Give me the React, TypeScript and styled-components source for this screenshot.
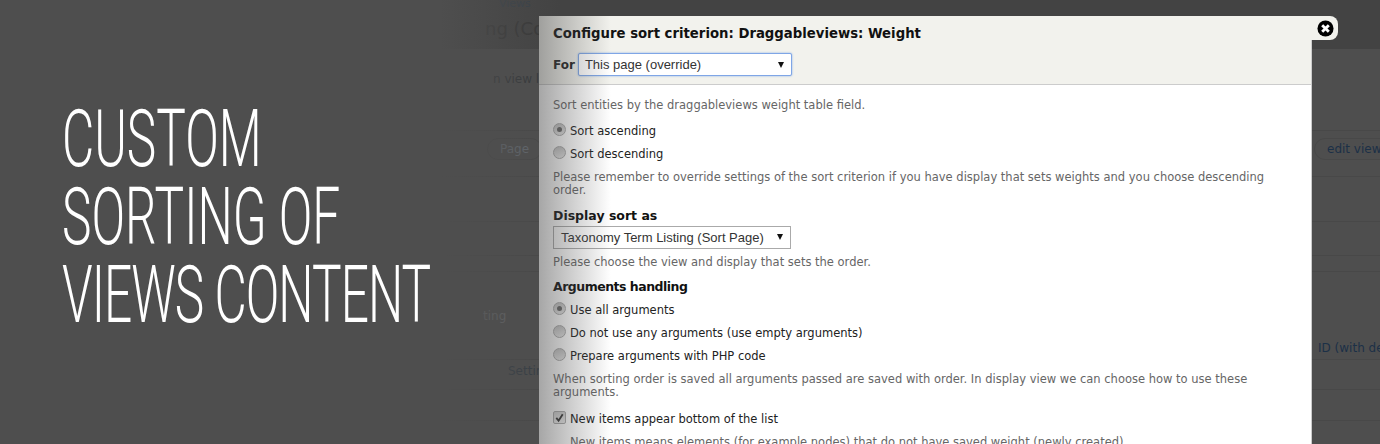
import React from "react";
import styled, { createGlobalStyle } from "styled-components";

const GlobalStyle = createGlobalStyle`
  html, body {
    margin: 0;
    padding: 0;
    background: #4e4e4e;
  }
`;

const App: React.FC = () => {
  return (
    <>
      <GlobalStyle />
      <Page>
        <Backdrop>
          <BackRow height={49} dark>
            <BackCell>
              <Breadcrumb>Views</Breadcrumb>
              <PageHeading>ng (Co</PageHeading>
            </BackCell>
            <span />
            <span />
          </BackRow>
          <BackRow height={82}>
            <BackCell>
              <BackText top={22} left={493} tone="#333639">n view l</BackText>
            </BackCell>
            <span />
            <span />
          </BackRow>
          <BackRow height={46}>
            <BackCell>
              <BackPill left={487} tone="#666c73">Page</BackPill>
            </BackCell>
            <span />
            <BackCell>
              <BackPill left={2} tone="#1c3047">edit view</BackPill>
            </BackCell>
          </BackRow>
          <BackRow height={45} />
          <BackRow height={34} />
          <BackRow height={16} />
          <BackRow height={88}>
            <BackCell>
              <BackText top={36} left={483} tone="#6a6c6e">ting</BackText>
            </BackCell>
            <span />
            <BackCell>
              <BackText top={68} left={6} tone="#1c3047">ID (with de</BackText>
            </BackCell>
          </BackRow>
          <BackRow height={30}>
            <BackCell>
              <BackText top={3} left={508} tone="#343c44">Settings</BackText>
            </BackCell>
            <span />
            <span />
          </BackRow>
          <BackRow height={31} />
        </Backdrop>
        <Fade />
        <Title>
          <TitleLine>CUSTOM</TitleLine>
          <TitleLine>SORTING OF</TitleLine>
          <TitleLine tight>VIEWS CONTENT</TitleLine>
        </Title>
        <Modal>
          <ModalHeader>
            <ModalTitle>Configure sort criterion: Draggableviews: Weight</ModalTitle>
            <ForRow>
              <ForLabel>For</ForLabel>
              <Select focused>
                This page (override)
                <Arrow />
              </Select>
            </ForRow>
          </ModalHeader>
          <ModalBody>
            <Description first>Sort entities by the draggableviews weight table field.</Description>
            <Option>
              <Radio checked />
              Sort ascending
            </Option>
            <Option>
              <Radio />
              Sort descending
            </Option>
            <Description>
              Please remember to override settings of the sort criterion if you have display that sets weights and you choose descending order.
            </Description>
            <SectionLabel top={11} gap={2}>Display sort as</SectionLabel>
            <Select>
              Taxonomy Term Listing (Sort Page)
              <Arrow />
            </Select>
            <Description>Please choose the view and display that sets the order.</Description>
            <SectionLabel top={10} gap={4} tight>Arguments handling</SectionLabel>
            <Option>
              <Radio checked />
              Use all arguments
            </Option>
            <Option>
              <Radio />
              Do not use any arguments (use empty arguments)
            </Option>
            <Option>
              <Radio />
              Prepare arguments with PHP code
            </Option>
            <Description>
              When sorting order is saved all arguments passed are saved with order. In display view we can choose how to use these arguments.
            </Description>
            <Option>
              <Checkbox>
                <svg viewBox="0 0 12 12" width="11" height="11">
                  <path d="M2.5 6.5l2.5 3L9.5 2.5" fill="none" stroke="#333" strokeWidth="2" />
                </svg>
              </Checkbox>
              New items appear bottom of the list
            </Option>
            <Description indent>
              New items means elements (for example nodes) that do not have saved weight (newly created).
            </Description>
          </ModalBody>
          <Shade />
          <CloseTab>
            <CloseIcon viewBox="0 0 18 18">
              <circle cx="9" cy="9" r="8.5" fill="#000" />
              <path d="M5.5 5.5l7 7M12.5 5.5l-7 7" stroke="#fff" strokeWidth="3" />
            </CloseIcon>
          </CloseTab>
        </Modal>
      </Page>
    </>
  );
};

export default App;

const Page = styled.div`
  position: relative;
  width: 1380px;
  height: 444px;
  overflow: hidden;
  background: #4e4e4e;
  font-family: "DejaVu Sans", sans-serif;
`;

const Backdrop = styled.div`
  position: absolute;
  inset: 0;
`;

const BackRow = styled.div<{ height: number; dark?: boolean }>`
  display: grid;
  grid-template-columns: 539px 773px 68px;
  box-sizing: border-box;
  height: ${({ height }) => height}px;
  background: ${({ dark }) => (dark ? "#434343" : "transparent")};
  border-bottom: ${({ dark }) => (dark ? "0" : "1px solid #484848")};
`;

const BackCell = styled.div`
  overflow: hidden;
  white-space: nowrap;
`;

const Breadcrumb = styled.div`
  padding: 0 0 0 499px;
  height: 7px;
  font-size: 11px;
  line-height: 7px;
  color: #364049;
`;

const PageHeading = styled.div`
  padding: 10px 0 0 485px;
  font-size: 18px;
  line-height: 24px;
  color: #363636;
`;

const BackText = styled.div<{ top: number; left: number; tone: string }>`
  padding: ${({ top }) => top}px 0 0 ${({ left }) => left}px;
  font-size: 12px;
  line-height: 16px;
  color: ${({ tone }) => tone};
`;

const BackPill = styled.div<{ left: number; tone: string }>`
  display: inline-block;
  margin: 7px 0 0 ${({ left }) => left}px;
  padding: 0 12px;
  height: 20px;
  line-height: 20px;
  font-size: 12px;
  color: ${({ tone }) => tone};
  border: 1px solid #484848;
  border-radius: 11px;
`;

const Fade = styled.div`
  position: absolute;
  left: 0;
  top: 0;
  bottom: 0;
  width: 560px;
  background: linear-gradient(to right, #4e4e4e 440px, rgba(78, 78, 78, 0));
`;

const Title = styled.h1`
  position: absolute;
  left: 62px;
  top: 100px;
  margin: 0;
  font-family: "Roboto", sans-serif;
  font-weight: 300;
  color: #fff;
  transform: scaleX(0.62);
  transform-origin: left top;
`;

const TitleLine = styled.div<{ tight?: boolean }>`
  font-size: 80px;
  line-height: 78px;
  letter-spacing: ${({ tight }) => (tight ? "-1.5px" : "0")};
  white-space: nowrap;
`;

const Modal = styled.div`
  position: absolute;
  left: 539px;
  top: 16px;
  box-sizing: border-box;
  width: 773px;
  height: 440px;
  background: #fff;
  border-right: 1px solid #ccc;
  font-size: 11.5px;
`;

const ModalHeader = styled.div`
  height: 68px;
  padding: 0 14px;
  background: #f2f2ed;
  border-bottom: 1px solid #ccc;
`;

const ModalTitle = styled.div`
  padding-top: 9px;
  font-size: 13.25px;
  line-height: 17px;
  font-weight: 700;
  color: #111;
`;

const ForRow = styled.div`
  display: flex;
  align-items: center;
  gap: 3px;
  margin-top: 11px;
`;

const ForLabel = styled.span`
  font-weight: 700;
  font-size: 12px;
  color: #222;
`;

const Select = styled.div<{ focused?: boolean }>`
  display: flex;
  align-items: center;
  justify-content: space-between;
  box-sizing: border-box;
  width: ${({ focused }) => (focused ? "214px" : "238px")};
  height: 23px;
  margin-bottom: ${({ focused }) => (focused ? "0" : "7px")};
  padding: 0 7px 0 ${({ focused }) => (focused ? "6px" : "7px")};
  background: #fff;
  border: 1px solid ${({ focused }) => (focused ? "#7fa6e6" : "#aaa")};
  border-radius: ${({ focused }) => (focused ? "2px" : "0")};
  box-shadow: ${({ focused }) => (focused ? "0 0 2px #7fa6e6" : "none")};
  font-family: "Liberation Sans", sans-serif;
  font-size: 13px;
  color: #333;
`;

const Arrow = styled.span`
  width: 0;
  height: 0;
  border-left: 3.5px solid transparent;
  border-right: 3.5px solid transparent;
  border-top: 6px solid #111;
`;

const ModalBody = styled.div`
  padding: 8.5px 14px 0;
`;

const Description = styled.div<{ indent?: boolean; first?: boolean }>`
  margin: 5.5px 0 ${({ first }) => (first ? "7px" : "8px")};
  margin-left: ${({ indent }) => (indent ? "17px" : "0")};
  line-height: 13px;
  color: #666;
`;

const Option = styled.div`
  display: flex;
  align-items: center;
  gap: 4px;
  height: 23px;
  color: #222;
`;

const Radio = styled.span<{ checked?: boolean }>`
  display: flex;
  align-items: center;
  justify-content: center;
  box-sizing: border-box;
  width: 13px;
  height: 13px;
  margin-bottom: 3px;
  border-radius: 50%;
  border: 1px solid #aaa;
  background: linear-gradient(#c4c4c4, #e6e6e6);
  &::after {
    content: "";
    display: ${({ checked }) => (checked ? "block" : "none")};
    width: 5px;
    height: 5px;
    border-radius: 50%;
    background: #666;
  }
`;

const Checkbox = styled.span`
  display: flex;
  align-items: center;
  justify-content: center;
  box-sizing: border-box;
  width: 13px;
  height: 13px;
  margin-bottom: 2px;
  border-radius: 2px;
  border: 1px solid #aaa;
  background: linear-gradient(#d0d0d0, #eee);
`;

const SectionLabel = styled.div<{ top: number; gap: number; tight?: boolean }>`
  margin: ${({ top }) => top}px 0 ${({ gap }) => gap}px;
  font-size: 12.5px;
  line-height: 16px;
  font-weight: 700;
  letter-spacing: ${({ tight }) => (tight ? "-0.5px" : "0")};
  color: #111;
`;

const Shade = styled.div`
  position: absolute;
  left: 0;
  top: 0;
  bottom: 0;
  width: 72px;
  background: linear-gradient(to right, rgba(78, 78, 78, 0.5), rgba(78, 78, 78, 0));
  pointer-events: none;
`;

const CloseTab = styled.div`
  position: absolute;
  left: 100%;
  top: 0;
  display: flex;
  align-items: center;
  justify-content: flex-end;
  width: 27px;
  height: 24px;
  padding-right: 4px;
  box-sizing: border-box;
  background: #f2f2ed;
  border-radius: 0 8px 8px 0;
`;

const CloseIcon = styled.svg`
  width: 17px;
  height: 17px;
`;
